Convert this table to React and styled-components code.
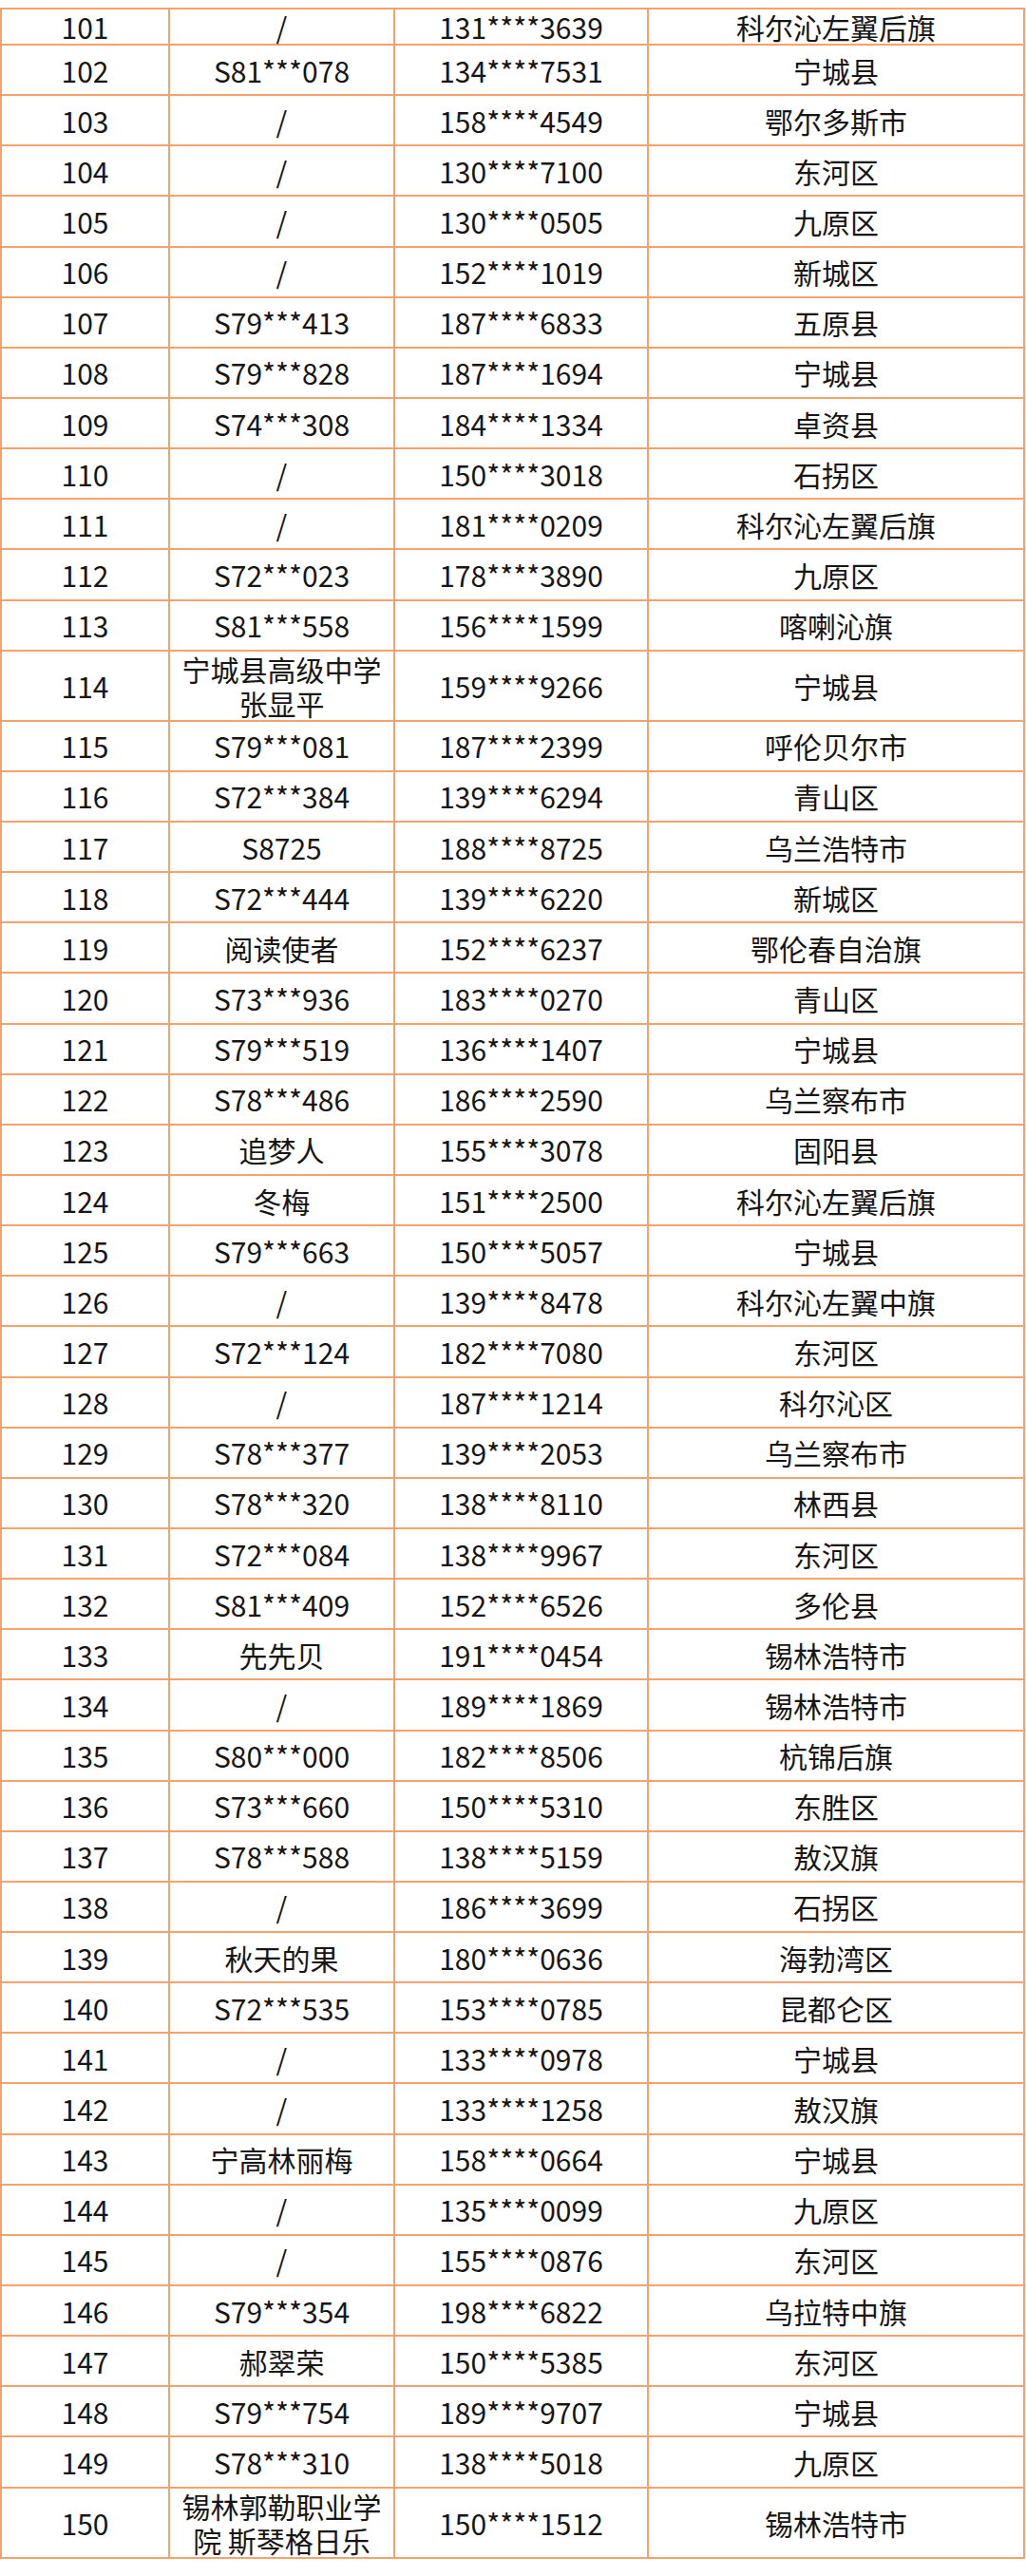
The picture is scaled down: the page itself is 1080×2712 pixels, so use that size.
import React from "react";
import styled, { createGlobalStyle } from "styled-components";

const Global = createGlobalStyle`
  html, body { margin: 0; padding: 0; background: #ffffff; }
  body { font-family: "Noto Sans CJK SC", "Noto Sans", sans-serif; }
`;

const Page = styled.div`
  padding-top: 8px;
  width: 1080px;
`;

const Table = styled.div`
  display: grid;
  grid-template-columns: 177px 237px 267px 396px;
  width: 1079px;
  box-sizing: border-box;
  border-top: 2px solid #f5a26c;
  border-left: 2px solid #f5a26c;
`;

const Cell = styled.div`
  box-sizing: border-box;
  min-height: ${(p) => (p.$short ? "38px" : "53.15px")};
  border-right: 2px solid #f5a26c;
  border-bottom: 2px solid #f5a26c;
  display: flex;
  align-items: center;
  justify-content: center;
  text-align: center;
  font-size: 30px;
  line-height: 36px;
  color: #161616;
  padding: 0;
`;

const rows = [
  ["101", "/", "131****3639", "科尔沁左翼后旗"],
  ["102", "S81***078", "134****7531", "宁城县"],
  ["103", "/", "158****4549", "鄂尔多斯市"],
  ["104", "/", "130****7100", "东河区"],
  ["105", "/", "130****0505", "九原区"],
  ["106", "/", "152****1019", "新城区"],
  ["107", "S79***413", "187****6833", "五原县"],
  ["108", "S79***828", "187****1694", "宁城县"],
  ["109", "S74***308", "184****1334", "卓资县"],
  ["110", "/", "150****3018", "石拐区"],
  ["111", "/", "181****0209", "科尔沁左翼后旗"],
  ["112", "S72***023", "178****3890", "九原区"],
  ["113", "S81***558", "156****1599", "喀喇沁旗"],
  ["114", "宁城县高级中学张显平", "159****9266", "宁城县"],
  ["115", "S79***081", "187****2399", "呼伦贝尔市"],
  ["116", "S72***384", "139****6294", "青山区"],
  ["117", "S8725", "188****8725", "乌兰浩特市"],
  ["118", "S72***444", "139****6220", "新城区"],
  ["119", "阅读使者", "152****6237", "鄂伦春自治旗"],
  ["120", "S73***936", "183****0270", "青山区"],
  ["121", "S79***519", "136****1407", "宁城县"],
  ["122", "S78***486", "186****2590", "乌兰察布市"],
  ["123", "追梦人", "155****3078", "固阳县"],
  ["124", "冬梅", "151****2500", "科尔沁左翼后旗"],
  ["125", "S79***663", "150****5057", "宁城县"],
  ["126", "/", "139****8478", "科尔沁左翼中旗"],
  ["127", "S72***124", "182****7080", "东河区"],
  ["128", "/", "187****1214", "科尔沁区"],
  ["129", "S78***377", "139****2053", "乌兰察布市"],
  ["130", "S78***320", "138****8110", "林西县"],
  ["131", "S72***084", "138****9967", "东河区"],
  ["132", "S81***409", "152****6526", "多伦县"],
  ["133", "先先贝", "191****0454", "锡林浩特市"],
  ["134", "/", "189****1869", "锡林浩特市"],
  ["135", "S80***000", "182****8506", "杭锦后旗"],
  ["136", "S73***660", "150****5310", "东胜区"],
  ["137", "S78***588", "138****5159", "敖汉旗"],
  ["138", "/", "186****3699", "石拐区"],
  ["139", "秋天的果", "180****0636", "海勃湾区"],
  ["140", "S72***535", "153****0785", "昆都仑区"],
  ["141", "/", "133****0978", "宁城县"],
  ["142", "/", "133****1258", "敖汉旗"],
  ["143", "宁高林丽梅", "158****0664", "宁城县"],
  ["144", "/", "135****0099", "九原区"],
  ["145", "/", "155****0876", "东河区"],
  ["146", "S79***354", "198****6822", "乌拉特中旗"],
  ["147", "郝翠荣", "150****5385", "东河区"],
  ["148", "S79***754", "189****9707", "宁城县"],
  ["149", "S78***310", "138****5018", "九原区"],
  ["150", "锡林郭勒职业学院 斯琴格日乐", "150****1512", "锡林浩特市"],
];

export default function App() {
  return (
    <>
      <Global />
      <Page>
        <Table>
          {rows.map((r, i) =>
            r.map((c, j) => (
              <Cell key={`${i}-${j}`} $short={i === 0}>
                {c}
              </Cell>
            ))
          )}
        </Table>
      </Page>
    </>
  );
}
